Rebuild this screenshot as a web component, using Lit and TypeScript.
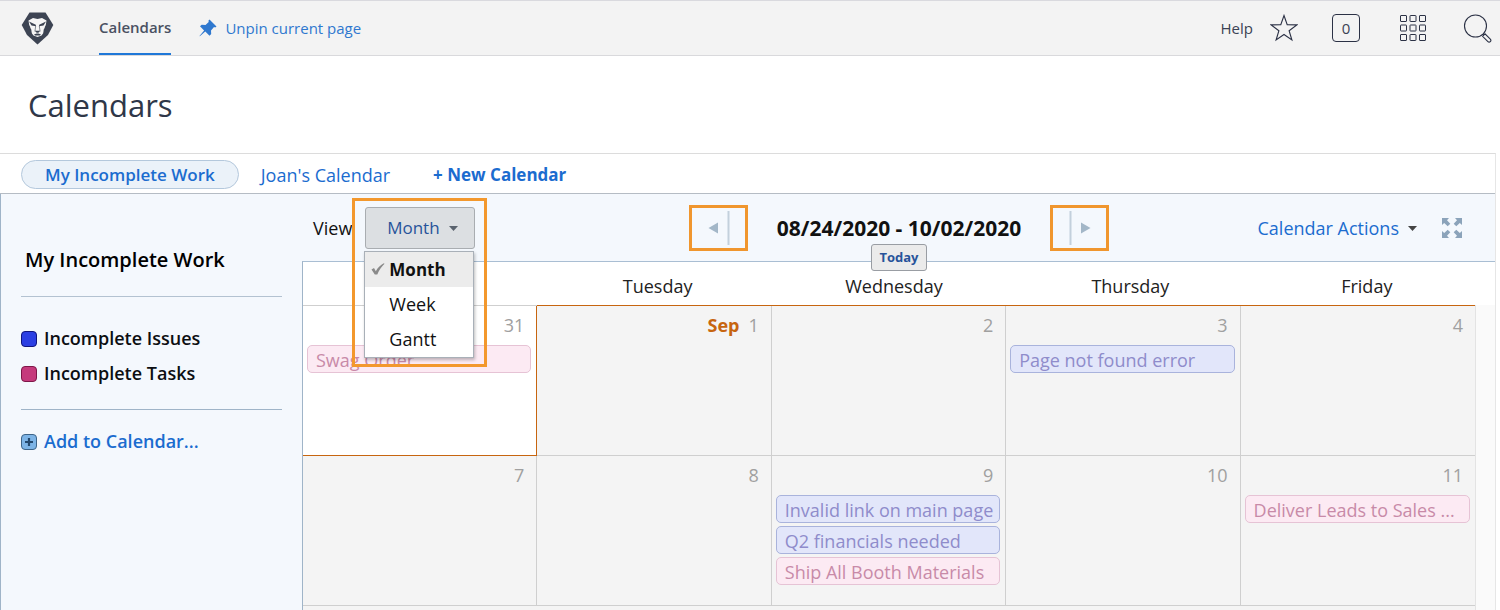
import { LitElement, html, css, svg, nothing } from "lit";
import { customElement, property, state } from "lit/decorators.js";
import { classMap } from "lit/directives/class-map.js";

interface CalEvent {
  title: string;
  kind: "issue" | "task";
}

interface Day {
  num: number;
  month?: string;
  current?: boolean;
  events?: CalEvent[];
}

const DAY_NAMES = ["Monday", "Tuesday", "Wednesday", "Thursday", "Friday"];

const WEEKS: Day[][] = [
  [
    { num: 31, current: true, events: [{ title: "Swag Order", kind: "task" }] },
    { num: 1, month: "Sep" },
    { num: 2 },
    { num: 3, events: [{ title: "Page not found error", kind: "issue" }] },
    { num: 4 },
  ],
  [
    { num: 7 },
    { num: 8 },
    {
      num: 9,
      events: [
        { title: "Invalid link on main page", kind: "issue" },
        { title: "Q2 financials needed", kind: "issue" },
        { title: "Ship All Booth Materials", kind: "task" },
      ],
    },
    { num: 10 },
    { num: 11, events: [{ title: "Deliver Leads to Sales ...", kind: "task" }] },
  ],
];

const reset = css`
  * {
    box-sizing: border-box;
  }
  button {
    font: inherit;
    color: inherit;
    background: none;
    border: 0;
    padding: 0;
    cursor: pointer;
  }
  a {
    color: #1b6ccf;
    text-decoration: none;
  }
  svg {
    display: block;
  }
`;

@customElement("app-header")
class AppHeader extends LitElement {
  static styles = [
    reset,
    css`
      :host {
        display: block;
      }
      .bar {
        display: flex;
        align-items: stretch;
        height: 56px;
        padding: 0 8px 0 21px;
        background: #f3f3f3;
        border-top: 1px solid #d9d9de;
        border-bottom: 1px solid #d9d9dc;
        font-size: 15px;
        color: #3b4254;
      }
      .logo {
        display: flex;
        align-items: center;
        margin-right: 45px;
      }
      .tab {
        display: flex;
        align-items: center;
        color: #4a5162;
        font-weight: 600;
        border-bottom: 2px solid #1f78d8;
      }
      .pin {
        display: flex;
        align-items: center;
        gap: 8px;
        margin-left: 28px;
        color: #2f78cf;
      }
      .tools {
        display: flex;
        align-items: center;
        margin-left: auto;
      }
      .help {
        color: #3b4254;
        margin-right: 17px;
      }
      .star {
        margin-right: 34px;
      }
      .count {
        width: 28px;
        height: 28px;
        border: 1px solid #2b3145;
        border-radius: 4px;
        margin-right: 40px;
        line-height: 26px;
      }
      .grid {
        margin-right: 36px;
      }
    `,
  ];

  render() {
    return html`<header class="bar">
      <a class="logo" href="#" aria-label="Home">
        <svg width="33" height="33" viewBox="0 0 33 33">
          <path d="M8.500 .5h16L32.300 13 27 23 16.500 32.500 6 23 .7 13z" fill="#3d4453" />
          <path
            d="M7.500 8.500 12 6l4.500 1L21 6l4.500 2.500-.7 4.500-1 2-.6 5-2.700 3.500-4 1.500-4-1.500-2.700-3.500-.6-5-1-2z"
            fill="#f6f6f6"
          />
          <path d="M8 9.500l6.800 3.300.2 1.500-4.500-.8zM25 9.500l-6.800 3.300-.2 1.500 4.500-.8z" fill="#3d4453" />
          <path d="M14.700 14l-.8 5.500M18.300 14l.8 5.500" fill="none" stroke="#3d4453" stroke-width=".6" />
          <path d="M13.800 18.800h5.400l-1.800 2h-1.800z" fill="#3d4453" />
          <path d="M13 22.600l2.600-1h1.800l2.600 1-1.200 1h-4.600z" fill="#3d4453" />
          <path d="M8.300 15l2 2.500.5 4.500-2-2zM24.700 15l-2 2.500-.5 4.500 2-2z" fill="#3d4453" />
        </svg>
      </a>
      <a class="tab" href="#">Calendars</a>
      <a class="pin" href="#">
        <svg width="18" height="18" viewBox="0 0 18 18" fill="#2f78cf">
          <path d="M10.500 .5l7 7-1.300.9-1.200-.3-3 3.300.2 3.600-1.700 1.700-4.200-4.200L.8 17.300l-.3-.3 4.600-5.500L1 7.200l1.700-1.500 3.800.3L9.700 3l-.2-1.400z" />
        </svg>
        Unpin current page
      </a>
      <div class="tools">
        <a class="help" href="#">Help</a>
        <button class="star" aria-label="Favorites">
          <svg width="28" height="28" viewBox="0 0 28 28" fill="none" stroke="#2b3145" stroke-width="1.1">
            <path d="M14 1.500l3.200 9.200 9.600.2-7.700 5.800 2.800 9.300L14 20.500 6.100 26l2.800-9.300L1.200 10.900l9.600-.2z" />
          </svg>
        </button>
        <button class="count" aria-label="Notifications">0</button>
        <button class="grid" aria-label="Apps">
          <svg width="27" height="27" viewBox="0 0 27 27" fill="none" stroke="#2b3145">
            ${[0.5, 10, 19.5].map((y) =>
              [0.5, 10, 19.5].map((x) => svg`<rect x=${x} y=${y} width="6" height="6" rx=".5" />`),
            )}
          </svg>
        </button>
        <button aria-label="Search">
          <svg width="29" height="29" viewBox="0 0 29 29" fill="none" stroke="#2b3145" stroke-width="1.100">
            <circle cx="12.500" cy="12" r="11" />
            <path d="M20.200 19.800l1.200 1.200M19.600 22.300l2.400-2.400 5.300 5.300a1.600 1.600 0 0 1-2.400 2.400z" />
          </svg>
        </button>
      </div>
    </header>`;
  }
}

@customElement("calendar-sidebar")
class CalendarSidebar extends LitElement {
  static styles = [
    reset,
    css`
      :host {
        display: block;
        padding: 47px 20px 0;
        font-size: 18px;
        line-height: 35px;
        font-weight: 600;
        color: #0c0e12;
      }
      h2 {
        margin: 0;
        padding: 0 4px 17px;
        font-size: 20px;
        line-height: 38px;
        font-weight: 600;
        color: #000;
        border-bottom: 1px solid #b3c2d1;
      }
      ul {
        list-style: none;
        margin: 0;
        padding: 24px 0 18px;
        border-bottom: 1px solid #9fb4c8;
      }
      li,
      .add {
        display: flex;
        align-items: center;
        gap: 7px;
      }
      .add {
        margin-top: 14px;
      }
      .swatch {
        width: 16px;
        height: 16px;
        border-radius: 4px;
        border: 1px solid;
      }
      .issue {
        background: #2b3fe3;
        border-color: #10157e;
      }
      .task {
        background: #c53a7c;
        border-color: #7d1748;
      }
    `,
  ];

  render() {
    return html`
      <h2>My Incomplete Work</h2>
      <ul>
        <li><span class="swatch issue"></span>Incomplete Issues</li>
        <li><span class="swatch task"></span>Incomplete Tasks</li>
      </ul>
      <a class="add" href="#">
        <svg width="16" height="16" viewBox="0 0 16 16">
          <rect x=".5" y=".5" width="15" height="15" rx="3.500" fill="#7db4e6" stroke="#3d6488" />
          <path d="M8 4v8M4 8h8" stroke="#24496e" stroke-width="2.200" />
        </svg>
        Add to Calendar...
      </a>
    `;
  }
}

@customElement("calendar-toolbar")
class CalendarToolbar extends LitElement {
  @state() view = "Month";
  @state() open = true;

  static styles = [
    reset,
    css`
      :host {
        display: grid;
        grid-template-columns: 1fr auto 1fr;
        align-items: center;
        height: 67px;
        padding-left: 1px;
        font-size: 18px;
        color: #111;
      }
      .view {
        display: flex;
        align-items: center;
        gap: 13px;
        padding-left: 10px;
      }
      .picker {
        position: relative;
      }
      .current {
        display: flex;
        align-items: center;
        justify-content: center;
        gap: 9px;
        width: 110px;
        height: 42px;
        padding-left: 4px;
        background: #dcdfe2;
        border: 1px solid #a9adb1;
        border-radius: 3px;
        color: #27539a;
        font-size: 17px;
      }
      .menu {
        position: absolute;
        z-index: 3;
        top: 44px;
        left: -1px;
        width: 110px;
        margin: 0;
        padding: 0;
        list-style: none;
        background: #fff;
        border: 1px solid #a9b0b8;
        box-shadow: 1px 2px 3px rgba(0, 0, 0, 0.25);
      }
      .item {
        display: grid;
        grid-template-columns: 16px 1fr;
        align-items: center;
        gap: 2px;
        width: 100%;
        height: 35px;
        padding-left: 6px;
        text-align: left;
      }
      .item .label {
        grid-column: 2;
      }
      .chosen {
        background: #ececec;
        font-size: 17px;
        font-weight: 700;
      }
      .callout {
        position: absolute;
        z-index: 4;
        inset: -9px -12px -118px -13px;
        border: 3px solid #f3982d;
        pointer-events: none;
      }
      .range {
        display: flex;
        align-items: center;
      }
      .step {
        display: flex;
        align-items: center;
        justify-content: center;
        width: 59px;
        height: 46px;
        border: 3px solid #f0962e;
      }
      .dates {
        position: relative;
        min-width: 302px;
        text-align: center;
        font-size: 21px;
        font-weight: 700;
      }
      .today {
        position: absolute;
        z-index: 2;
        top: 30px;
        left: 50%;
        transform: translateX(-50%);
        width: 56px;
        height: 27px;
        background: #ebebeb;
        border: 1px solid #999da3;
        border-radius: 3px;
        color: #27539a;
        font-size: 13px;
        line-height: 25px;
      }
      .actions {
        display: flex;
        align-items: center;
        justify-content: flex-end;
        gap: 25px;
        padding-right: 33px;
      }
      .drop {
        display: flex;
        align-items: center;
        gap: 9px;
        color: #1b6ccf;
      }
      .caret {
        margin-top: 2px;
      }
    `,
  ];

  private caret(color: string) {
    return html`<svg class="caret" width="9" height="5" viewBox="0 0 9 5">
      <path d="M0 0h9L4.500 5z" fill=${color} />
    </svg>`;
  }

  private pick(view: string) {
    this.view = view;
    this.open = false;
  }

  private menu() {
    return html`<ul class="menu" role="menu">
        ${["Month", "Week", "Gantt"].map(
          (name) => html`<li role="none">
            <button
              role="menuitem"
              class=${classMap({ item: true, chosen: name === this.view })}
              @click=${() => this.pick(name)}
            >
              ${name === this.view
                ? html`<svg width="14" height="12" viewBox="0 0 14 12">
                    <path d="M.5 6.500 3 5l1.800 3.200C7 4.500 9.500 2 12.800.3l.7.5C10.300 3.800 8 7.500 6.300 11.500H3.800z" fill="#8a8a8a" />
                  </svg>`
                : nothing}
              <span class="label">${name}</span>
            </button>
          </li>`,
        )}
      </ul>
      <div class="callout"></div>`;
  }

  render() {
    return html`
      <div class="view">
        <span>View</span>
        <div class="picker">
          <button class="current" aria-haspopup="menu" @click=${() => (this.open = !this.open)}>
            ${this.view} ${this.caret("#5a636e")}
          </button>
          ${this.open ? this.menu() : nothing}
        </div>
      </div>
      <div class="range">
        <button class="step" aria-label="Previous">
          <svg width="22" height="36" viewBox="0 0 22 36">
            <path d="M10 12.500v11L.5 18z" fill="#a3b7c8" />
            <path d="M20.500 1v34" stroke="#c3d0dc" stroke-width="2" />
          </svg>
        </button>
        <div class="dates">
          08/24/2020 - 10/02/2020
          <button class="today">Today</button>
        </div>
        <button class="step" aria-label="Next">
          <svg width="22" height="36" viewBox="0 0 22 36">
            <path d="M12 12.500v11l9.500-5.500z" fill="#a3b7c8" />
            <path d="M1.500 1v34" stroke="#c3d0dc" stroke-width="2" />
          </svg>
        </button>
      </div>
      <div class="actions">
        <button class="drop">Calendar Actions ${this.caret("#444")}</button>
        <button aria-label="Full screen">
          <svg width="20" height="20" viewBox="0 0 20 20" fill="#8ba3ba">
            ${[0, 90, 180, 270].map(
              (a) => svg`<path transform=${`rotate(${a} 10 10)`} d="M0 0h7L5 2.200 8.300 5.700 5.700 8.300 2.200 5 0 7z" />`,
            )}
          </svg>
        </button>
      </div>
    `;
  }
}

@customElement("calendar-day")
class CalendarDay extends LitElement {
  @property({ attribute: false }) day!: Day;

  static styles = [
    reset,
    css`
      :host {
        display: block;
        min-width: 0;
        padding: 0 5px 0 4px;
      }
      .date {
        display: flex;
        justify-content: flex-end;
        gap: 9px;
        padding-right: 7px;
        font-size: 18px;
        line-height: 39px;
        color: #a0a0a0;
      }
      .month {
        color: #c7650f;
        font-weight: 700;
      }
      .events {
        display: grid;
        gap: 3px;
      }
      .event {
        display: block;
        height: 28px;
        padding: 0 4px 0 8px;
        border: 1px solid;
        border-radius: 5px;
        font-size: 18px;
        line-height: 28px;
        white-space: nowrap;
        overflow: hidden;
        text-overflow: ellipsis;
      }
      .issue {
        background: #e2e6fa;
        border-color: #a9b3dc;
        color: #8f8ccb;
      }
      .task {
        background: #fceaf3;
        border-color: #e6c3d5;
        color: #c88aa8;
      }
    `,
  ];

  render() {
    const { num, month, events = [] } = this.day;
    return html`
      <div class="date">
        ${month ? html`<span class="month">${month}</span>` : nothing}
        <span>${num}</span>
      </div>
      <div class="events">
        ${events.map((e) => html`<a href="#" class=${classMap({ event: true, [e.kind]: true })}>${e.title}</a>`)}
      </div>
    `;
  }
}

@customElement("app-root")
class AppRoot extends LitElement {
  static styles = [
    reset,
    css`
      :host {
        display: flex;
        flex-direction: column;
        height: 100vh;
        overflow: hidden;
        background: #fff;
        font-family: "Open Sans", "Noto Sans", sans-serif;
      }
      h1 {
        margin: 0;
        padding: 2px 28px 0;
        font-size: 31px;
        line-height: 95px;
        font-weight: 400;
        color: #2f3748;
      }
      main {
        flex: 1;
        min-height: 0;
        display: flex;
        flex-direction: column;
        margin-right: 4px;
        border-top: 1px solid #dcdcdc;
        border-right: 1px solid #e6e6e6;
      }
      .tabs {
        display: flex;
        align-items: center;
        height: 40px;
        padding: 2px 21px 0;
        gap: 22px;
        border-bottom: 1px solid #b5bcc4;
        font-size: 18px;
      }
      .tab.active {
        height: 29px;
        padding: 0 23px;
        border: 1px solid #b4c8dc;
        border-radius: 15px;
        background: #ebf2f9;
        font-size: 17px;
        line-height: 27px;
        font-weight: 600;
      }
      .tab.new {
        margin-left: 21px;
        font-size: 17px;
        font-weight: 700;
      }
      .panel {
        flex: 1;
        min-height: 0;
        display: grid;
        grid-template-columns: 301px minmax(0, 1fr);
        border-left: 1px solid #9fb4c8;
        background: #f4f8fd;
      }
      .pane {
        min-width: 0;
        min-height: 0;
        display: flex;
        flex-direction: column;
      }
      .calendar {
        flex: 1;
        min-height: 0;
        display: flex;
        flex-direction: column;
        background: #fff;
        border-top: 1px solid #a9bed3;
        border-left: 1px solid #9fb4c8;
      }
      .names {
        display: grid;
        grid-template-columns: repeat(5, 1fr);
        padding: 6px 10px 0 0;
        text-align: center;
        font-size: 18px;
        line-height: 37px;
        color: #222;
      }
      .body {
        flex: 1;
        display: grid;
        grid-template-columns: 1fr 20px;
      }
      .weeks {
        display: grid;
        grid-template-columns: repeat(5, minmax(0, 1fr));
        grid-auto-rows: 150px;
        border-top: 1px solid #cfcfcf;
        background: #f4f4f4;
      }
      .track {
        background: #fafafa;
        border-left: 1px solid #e3e3e3;
      }
      .day {
        background: #f4f4f4;
        border-right: 1px solid #cfcfcf;
        border-bottom: 1px solid #cfcfcf;
      }
      .day.last {
        border-right: 0;
      }
      .day.current {
        background: #fff;
        border-right-color: #c7650f;
        border-bottom-color: #c7650f;
      }
      .day.first {
        box-shadow: 0 -1px 0 0 #c7650f;
      }
    `,
  ];

  private renderDay(day: Day, week: number, col: number) {
    return html`<calendar-day
      class=${classMap({
        day: true,
        current: !!day.current,
        first: week === 0 && !day.current,
        last: col === 4,
      })}
      .day=${day}
    ></calendar-day>`;
  }

  render() {
    return html`
      <app-header></app-header>
      <h1>Calendars</h1>
      <main>
        <nav class="tabs">
          <a class="tab active" href="#">My Incomplete Work</a>
          <a class="tab" href="#">Joan's Calendar</a>
          <a class="tab new" href="#">+ New Calendar</a>
        </nav>
        <div class="panel">
          <calendar-sidebar></calendar-sidebar>
          <section class="pane">
            <calendar-toolbar></calendar-toolbar>
            <div class="calendar">
              <div class="names">${DAY_NAMES.map((n) => html`<span>${n}</span>`)}</div>
              <div class="body">
                <div class="weeks">${WEEKS.map((w, i) => w.map((d, j) => this.renderDay(d, i, j)))}</div>
                <div class="track"></div>
              </div>
            </div>
          </section>
        </div>
      </main>
    `;
  }
}
